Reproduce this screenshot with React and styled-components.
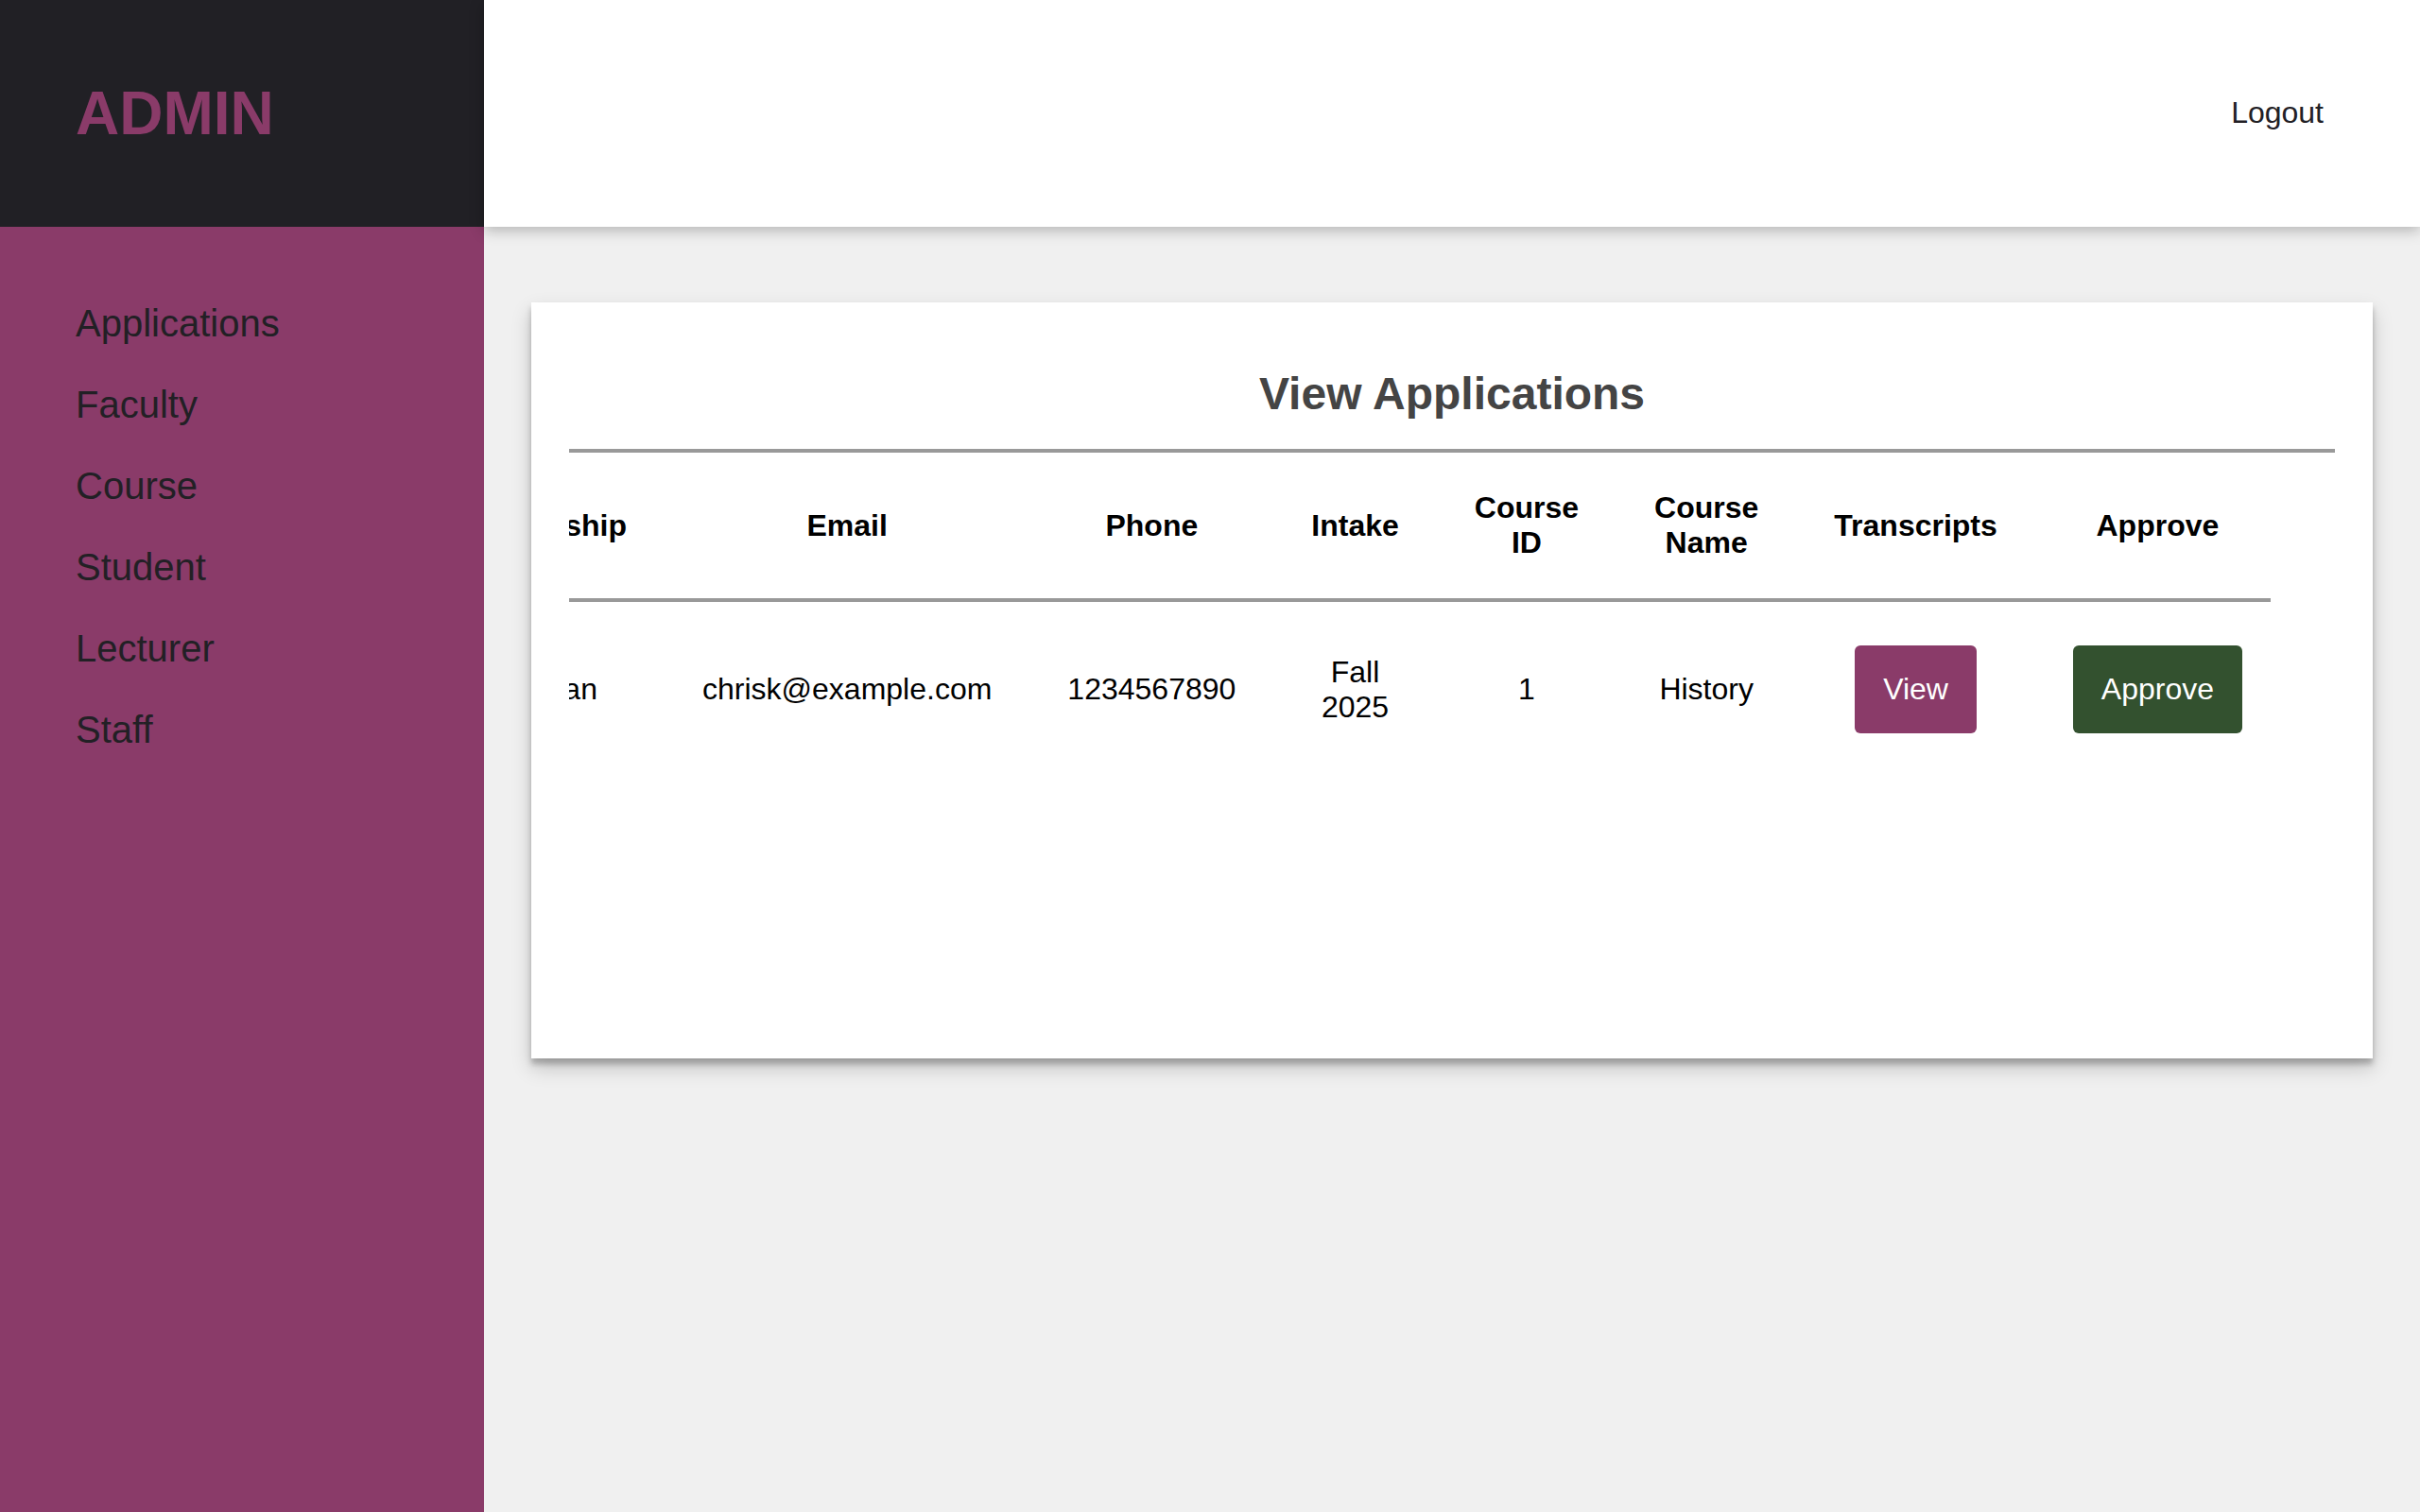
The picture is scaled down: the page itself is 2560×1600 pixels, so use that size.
import React from 'react';
import styled, { createGlobalStyle } from 'styled-components';

const GlobalStyle = createGlobalStyle`
  * { box-sizing: border-box; }
  html, body {
    margin: 0;
    padding: 0;
    background: #f0f0f0;
    font-family: "Liberation Sans", Arial, sans-serif;
  }
`;

const Page = styled.div`
  display: flex;
  min-height: 100vh;
`;

const Sidebar = styled.aside`
  width: 512px;
  flex-shrink: 0;
  display: flex;
  flex-direction: column;
  background: #8a3b69;
`;

const Brand = styled.div`
  height: 240px;
  display: flex;
  align-items: center;
  padding-left: 80px;
  background: #212025;
  color: #8a3b69;
  font-size: 64px;
  font-weight: 700;
`;

const Nav = styled.ul`
  list-style: none;
  margin: 0;
  padding: 79px 0 0 80px;
  display: flex;
  flex-direction: column;
  gap: 40px;
`;

const NavItem = styled.li`
  font-size: 40px;
  line-height: 46px;
  color: #222025;
  cursor: pointer;
`;

const Main = styled.main`
  flex: 1;
  min-width: 0;
  display: flex;
  flex-direction: column;
  background: #f0f0f0;
`;

const Topbar = styled.header`
  position: relative;
  z-index: 1;
  height: 240px;
  display: flex;
  align-items: center;
  justify-content: flex-end;
  padding: 0 102px 2px 0;
  background: #fff;
  box-shadow: 0 4px 14px rgba(0, 0, 0, 0.25);
`;

const Logout = styled.span`
  font-size: 32px;
  color: #222025;
  cursor: pointer;
`;

const Content = styled.section`
  padding: 80px 50px;
`;

const Card = styled.div`
  height: 800px;
  padding: 40px;
  background: #fff;
  box-shadow: 0 10px 20px rgba(0, 0, 0, 0.19), 0 6px 6px rgba(0, 0, 0, 0.23);
`;

const Title = styled.h2`
  margin: 29px 0 0;
  padding-bottom: 31px;
  border-bottom: 4px solid #999;
  text-align: center;
  font-size: 48px;
  font-weight: 700;
  color: #444;
`;

/* rtl so the table starts scrolled to its right end */
const TableScroll = styled.div`
  direction: rtl;
  overflow-x: auto;
  padding-right: 68px;
  scrollbar-width: none;
  &::-webkit-scrollbar { display: none; }
`;

const Table = styled.table`
  direction: ltr;
  width: 100%;
  border-collapse: collapse;
  font-size: 32px;
  color: #000;

  th:last-child, td:last-child { padding-right: 30px; }
`;

const Th = styled.th`
  padding: 40px;
  font-weight: 700;
  text-align: center;
  border-bottom: 4px solid #999;
`;

const Td = styled.td`
  padding: 46px 40px 40px;
  text-align: center;
`;

const Button = styled.button`
  padding: 28px 30px;
  border: none;
  border-radius: 6px;
  font-family: inherit;
  font-size: 32px;
  color: #fff;
  background: ${p => (p.$variant === 'approve' ? '#33512f' : '#8a3b69')};
  cursor: pointer;
`;

const menu = ['Applications', 'Faculty', 'Course', 'Student', 'Lecturer', 'Staff'];

const columns = [
  'Application ID', 'Name', 'Gender', 'Citizenship',
  'Email', 'Phone', 'Intake', 'Course ID', 'Course Name', 'Transcripts', 'Approve',
];

const applications = [
  {
    id: 1,
    name: 'Chris K',
    gender: 'Male',
    citizenship: 'Kenyan',
    email: 'chrisk@example.com',
    phone: '1234567890',
    intake: 'Fall 2025',
    courseId: 1,
    courseName: 'History',
  },
];

export default function App() {
  return (
    <>
      <GlobalStyle />
      <Page>
        <Sidebar>
          <Brand>ADMIN</Brand>
          <Nav>
            {menu.map(m => <NavItem key={m}>{m}</NavItem>)}
          </Nav>
        </Sidebar>

        <Main>
          <Topbar>
            <Logout>Logout</Logout>
          </Topbar>

          <Content>
            <Card>
              <Title>View Applications</Title>
              <TableScroll>
                <Table>
                  <thead>
                    <tr>
                      {columns.map(c => <Th key={c}>{c}</Th>)}
                    </tr>
                  </thead>
                  <tbody>
                    {applications.map(a => (
                      <tr key={a.id}>
                        <Td>{a.id}</Td>
                        <Td>{a.name}</Td>
                        <Td>{a.gender}</Td>
                        <Td>{a.citizenship}</Td>
                        <Td>{a.email}</Td>
                        <Td>{a.phone}</Td>
                        <Td>{a.intake}</Td>
                        <Td>{a.courseId}</Td>
                        <Td>{a.courseName}</Td>
                        <Td><Button>View</Button></Td>
                        <Td><Button $variant="approve">Approve</Button></Td>
                      </tr>
                    ))}
                  </tbody>
                </Table>
              </TableScroll>
            </Card>
          </Content>
        </Main>
      </Page>
    </>
  );
}
